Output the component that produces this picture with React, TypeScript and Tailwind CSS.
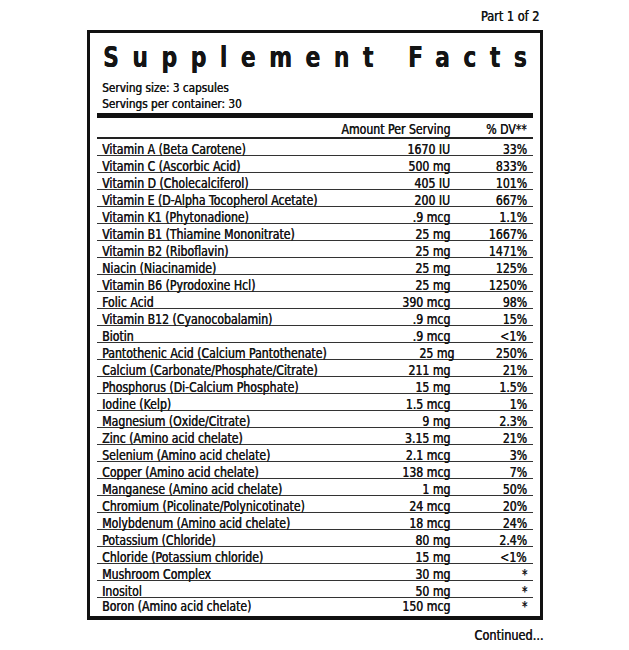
const rows: [string, string, string][] = [
  ['Vitamin A (Beta Carotene)', '1670 IU', '33%'],
  ['Vitamin C (Ascorbic Acid)', '500 mg', '833%'],
  ['Vitamin D (Cholecalciferol)', '405 IU', '101%'],
  ['Vitamin E (D-Alpha Tocopherol Acetate)', '200 IU', '667%'],
  ['Vitamin K1 (Phytonadione)', '.9 mcg', '1.1%'],
  ['Vitamin B1 (Thiamine Mononitrate)', '25 mg', '1667%'],
  ['Vitamin B2 (Riboflavin)', '25 mg', '1471%'],
  ['Niacin (Niacinamide)', '25 mg', '125%'],
  ['Vitamin B6 (Pyrodoxine Hcl)', '25 mg', '1250%'],
  ['Folic Acid', '390 mcg', '98%'],
  ['Vitamin B12 (Cyanocobalamin)', '.9 mcg', '15%'],
  ['Biotin', '.9 mcg', '<1%'],
  ['Pantothenic Acid (Calcium Pantothenate)', '25 mg', '250%'],
  ['Calcium (Carbonate/Phosphate/Citrate)', '211 mg', '21%'],
  ['Phosphorus (Di-Calcium Phosphate)', '15 mg', '1.5%'],
  ['Iodine (Kelp)', '1.5 mcg', '1%'],
  ['Magnesium (Oxide/Citrate)', '9 mg', '2.3%'],
  ['Zinc (Amino acid chelate)', '3.15 mg', '21%'],
  ['Selenium (Amino acid chelate)', '2.1 mcg', '3%'],
  ['Copper (Amino acid chelate)', '138 mcg', '7%'],
  ['Manganese (Amino acid chelate)', '1 mg', '50%'],
  ['Chromium (Picolinate/Polynicotinate)', '24 mcg', '20%'],
  ['Molybdenum (Amino acid chelate)', '18 mcg', '24%'],
  ['Potassium (Chloride)', '80 mg', '2.4%'],
  ['Chloride (Potassium chloride)', '15 mg', '<1%'],
  ['Mushroom Complex', '30 mg', '*'],
  ['Inositol', '50 mg', '*'],
  ['Boron (Amino acid chelate)', '150 mcg', '*'],
];

// condensed look: DejaVu Sans Condensed squeezed a bit more
const narrowL = 'inline-block whitespace-nowrap origin-left scale-x-[0.87]';
const narrowR = 'inline-block whitespace-nowrap origin-right scale-x-[0.87]';

export default function App() {
  return (
    <div className="w-[629px] h-[650px] bg-white text-[#141414] font-['DejaVu_Sans_Condensed','DejaVu_Sans',sans-serif] [text-shadow:0.45px_0_0_#141414]">
      <div className="h-[30px] pt-[7px] pr-[90px] text-right text-[14.5px] leading-[18px]">
        <span className={narrowR}>Part 1 of 2</span>
      </div>

      <div className="ml-[87px] w-[456px] border-[3px] border-b-[4px] border-[#111] px-[7px]">
        <h1 className="pl-[6px] pt-[11px] text-[28px] leading-[28px] font-bold [text-shadow:0.4px_0_0_#111]">
          <span className={narrowL + ' tracking-[15.5px]'}>Supplement Facts</span>
        </h1>
        <div className="pl-[5px] pt-[8px] text-[13px] leading-[15.5px]">
          <div>
            <span className="inline-block whitespace-nowrap origin-left scale-x-[0.9]">Serving size: 3 capsules</span>
          </div>
          <div>
            <span className="inline-block whitespace-nowrap origin-left scale-x-[0.9]">Servings per container: 30</span>
          </div>
        </div>

        <div className="mt-[2px] h-[5px] bg-[#111]" />

        <div className="flex items-end h-[21px] pb-[2px] border-b-2 border-[#222] text-[14px] leading-[12px]">
          <div className="flex-1" />
          <div className="w-[150px] text-right">
            <span className={narrowR}>Amount Per Serving</span>
          </div>
          <div className="w-[83px] pr-[6px] text-right">
            <span className={narrowR}>% DV**</span>
          </div>
        </div>

        {rows.map(([name, amount, dv], i) => (
          <div
            key={name}
            className={
              i === rows.length - 1
                ? 'flex items-end h-[18px] pb-[4px] pl-[5px] text-[14px] leading-[12px]'
                : 'flex items-end h-[17px] border-b border-[#333] pl-[5px] text-[14px] leading-[12px]'
            }
          >
            <div className="flex-1">
              <span className={narrowL}>{name}</span>
            </div>
            <div className="w-[100px] text-right">
              <span className={narrowR}>{amount}</span>
            </div>
            <div className="w-[83px] pr-[6px] text-right">
              <span className={narrowR}>{dv}</span>
            </div>
          </div>
        ))}
      </div>

      <div className="pt-[6px] pr-[86px] text-right text-[14.5px] leading-[18px]">
        <span className={narrowR}>Continued...</span>
      </div>
    </div>
  );
}
